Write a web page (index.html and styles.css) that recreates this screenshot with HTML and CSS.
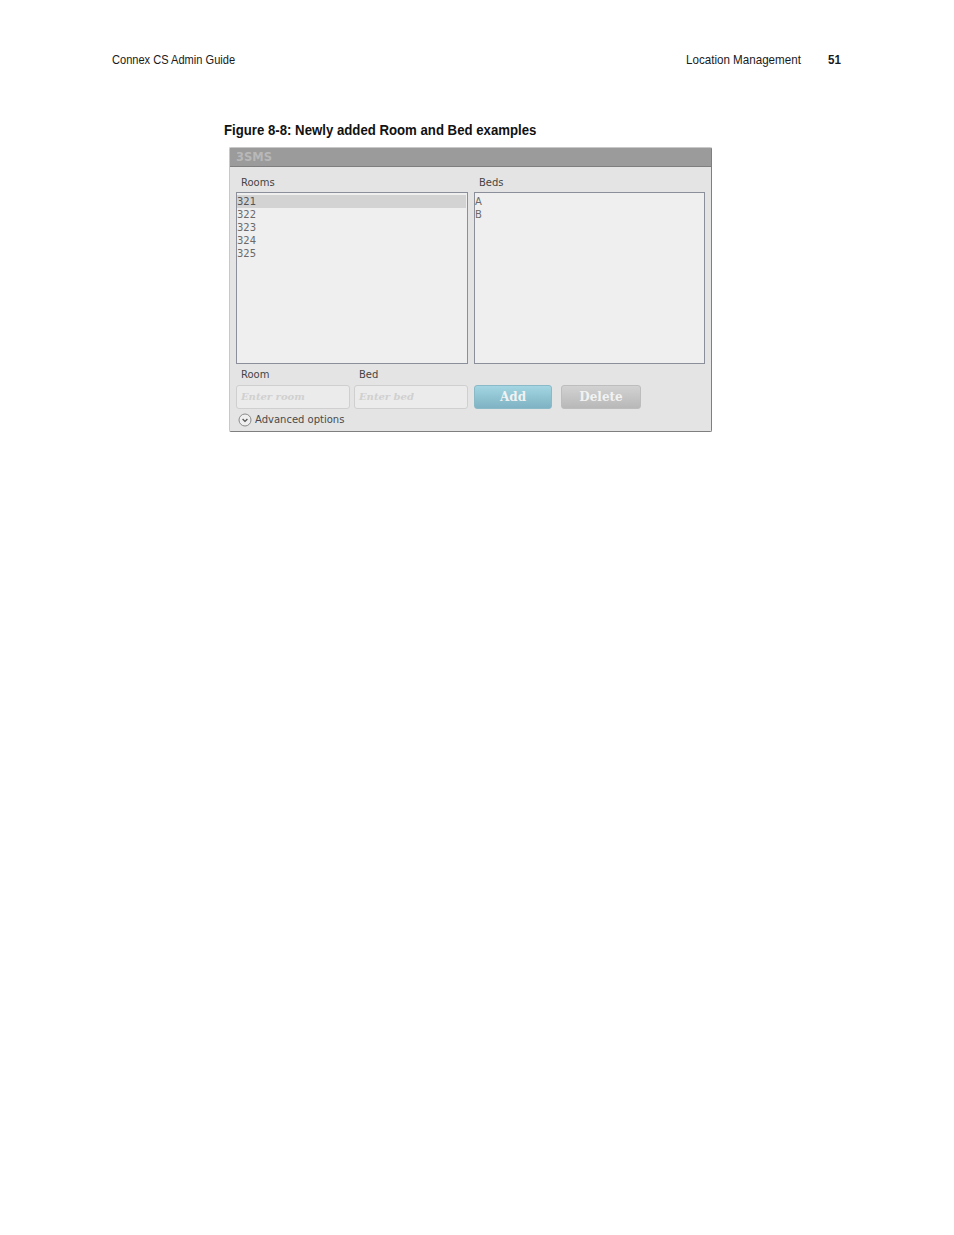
FILE: index.html
```html
<!DOCTYPE html>
<html>
<head>
<meta charset="utf-8">
<link rel="stylesheet" href="styles.css">
</head>
<body>
<div class="page">
  <div class="running-head">
    <span class="narrow guide">Connex CS Admin Guide</span>
    <span class="right"><span class="narrow section">Location Management</span><span class="narrow pgnum">51</span></span>
  </div>
  <div class="figure">
    <div class="caption"><span class="narrow cap">Figure 8-8: Newly added Room and Bed examples</span></div>
    <div class="panel">
      <div class="panel-title">3SMS</div>
      <div class="panel-body">
        <div class="lists">
          <div class="col">
            <div class="lbl">Rooms</div>
            <div class="listbox">
              <div class="item selected">321</div>
              <div class="item">322</div>
              <div class="item">323</div>
              <div class="item">324</div>
              <div class="item">325</div>
            </div>
          </div>
          <div class="col">
            <div class="lbl">Beds</div>
            <div class="listbox">
              <div class="item">A</div>
              <div class="item">B</div>
            </div>
          </div>
        </div>
        <div class="entry">
          <div class="field">
            <div class="lbl">Room</div>
            <div class="input">Enter room</div>
          </div>
          <div class="field">
            <div class="lbl">Bed</div>
            <div class="input">Enter bed</div>
          </div>
          <div class="btn add">Add</div>
          <div class="btn del">Delete</div>
        </div>
        <div class="adv">
          <svg class="adv-icon" width="14" height="14" viewBox="0 0 14 14">
            <circle cx="7" cy="7" r="6" fill="#efefef" stroke="#8a8a8a" stroke-width="1"/>
            <path d="M4.6 6 L7 8.4 L9.4 6" fill="none" stroke="#555" stroke-width="1.3"/>
          </svg>
          <span>Advanced options</span>
        </div>
      </div>
    </div>
  </div>
</div>
</body>
</html>
```

FILE: styles.css
```css
html, body {
  margin: 0;
  padding: 0;
  background: #ffffff;
}
.page {
  width: 954px;
  height: 1235px;
  box-sizing: border-box;
  padding: 52px 114px 0 112px;
}
.running-head {
  display: flex;
  justify-content: space-between;
  font-family: "Liberation Sans", Arial, sans-serif;
  font-size: 13.5px;
  line-height: 16px;
  color: #1a1a1a;
}
.narrow {
  display: inline-block;
  white-space: nowrap;
  transform: scaleX(0.86);
  transform-origin: left center;
}
.guide {
  width: 123px;
  transform: scaleX(0.82);
}
.right {
  display: flex;
}
.section {
  width: 114px;
  margin-right: 28px;
}
.pgnum {
  font-weight: bold;
  width: 12px;
}
.figure {
  margin-left: 112px;
  margin-top: 54px;
}
.caption {
  font-family: "Liberation Sans", Arial, sans-serif;
  font-weight: bold;
  font-size: 14.5px;
  line-height: 16px;
  color: #111;
}
.cap {
  transform: scaleX(0.91);
}
.panel {
  margin-top: 9px;
  margin-left: 5px;
  width: 483px;
  height: 285px;
  box-sizing: border-box;
  background: #e4e4e4;
  border: 1px solid #c8c8c8;
  border-right-color: #7f7f7f;
  border-bottom-color: #7f7f7f;
  border-radius: 2px;
  display: flex;
  flex-direction: column;
}
.panel-title {
  height: 18px;
  background: #9b9b9b;
  border-bottom: 1px solid #7e7e7e;
  color: #b8b8b8;
  font-family: "DejaVu Sans", Verdana, sans-serif;
  font-weight: bold;
  font-size: 11.5px;
  line-height: 18px;
  padding-left: 6px;
}
.panel-body {
  padding: 9px 6px 0 6px;
  font-family: "DejaVu Sans", Verdana, sans-serif;
  font-size: 10px;
  color: #4a4a4a;
}
.lists {
  display: flex;
  gap: 6px;
}
.col {
  width: 232px;
}
.col + .col {
  width: 231px;
}
.lbl {
  height: 16px;
  line-height: 14px;
  padding-left: 5px;
  font-size: 10px;
  color: #444;
}
.listbox {
  height: 168px;
  background: #efefef;
  border: 1px solid #8a8f99;
  padding-top: 2px;
  padding-right: 1px;
}
.item {
  height: 13px;
  line-height: 13px;
  color: #6a6a6a;
  font-size: 10px;
}
.item.selected {
  background: #d3d3d3;
  color: #555;
}
.entry {
  display: flex;
  align-items: flex-end;
  margin-top: 4px;
}
.field {
  width: 114px;
  margin-right: 4px;
}
.field .lbl {
  height: 17px;
}
.input {
  height: 24px;
  box-sizing: border-box;
  border: 1px solid #cfcfcf;
  border-radius: 3px;
  background: #ebebeb;
  font-family: "DejaVu Serif", Georgia, serif;
  font-style: italic;
  font-weight: bold;
  font-size: 10px;
  color: #d0d0d0;
  line-height: 22px;
  padding-left: 4px;
}
.btn {
  height: 24px;
  box-sizing: border-box;
  border-radius: 3px;
  font-family: "DejaVu Serif", Georgia, serif;
  font-weight: bold;
  font-size: 12px;
  line-height: 22px;
  text-align: center;
  color: #f2f2f2;
}
.btn.add {
  width: 78px;
  margin-left: 2px;
  background: linear-gradient(#a3d6e2, #7fb2c3);
  border: 1px solid #8ab9c8;
}
.btn.del {
  width: 80px;
  margin-left: 9px;
  background: linear-gradient(#d2d2d2, #b8b8b8);
  border: 1px solid #bdbdbd;
}
.adv {
  display: flex;
  align-items: center;
  gap: 3px;
  margin-top: 3px;
  margin-left: 2px;
  height: 15px;
  font-size: 10px;
  color: #4a4a4a;
}
.adv-icon {
  display: block;
}
```
